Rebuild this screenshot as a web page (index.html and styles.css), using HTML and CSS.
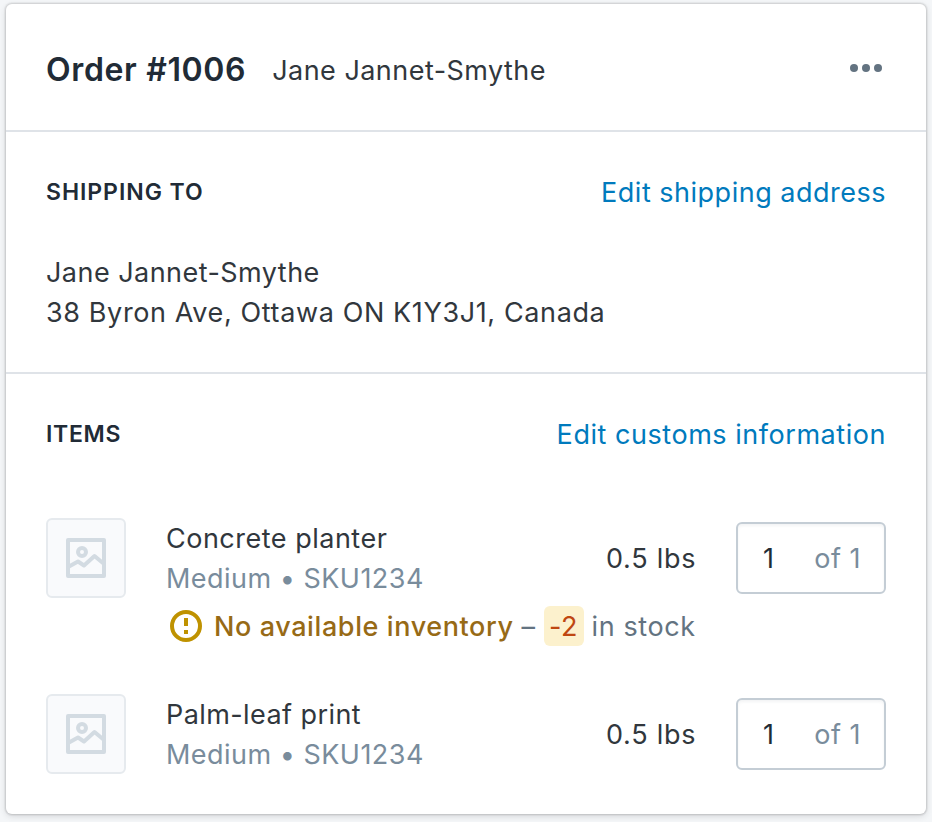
FILE: index.html
```html
<!DOCTYPE html>
<html lang="en">
<head>
<meta charset="utf-8">
<title>Order #1006</title>
<link rel="stylesheet" href="styles.css">
</head>
<body>
<main class="card">
  <header class="header">
    <h1><span class="t order">Order #1006</span></h1>
    <span class="t customer">Jane Jannet-Smythe</span>
    <svg class="more" width="34" height="10" viewBox="0 0 34 10"><circle cx="5" cy="5" r="4"/><circle cx="17" cy="5" r="4"/><circle cx="29" cy="5" r="4"/></svg>
  </header>
  <section class="shipping">
    <div class="section-head"><h2><span class="t ship-title">SHIPPING TO</span></h2><a class="t edit-ship">Edit shipping address</a></div>
    <p class="address"><span class="t name">Jane Jannet-Smythe</span><br><span class="t street">38 Byron Ave, Ottawa ON K1Y3J1, Canada</span></p>
  </section>
  <section class="items">
    <div class="section-head"><h2><span class="t items-title">ITEMS</span></h2><a class="t edit-customs">Edit customs information</a></div>
    <article class="item">
      <div class="thumb"><svg width="40" height="40" viewBox="0 0 40 40"><path d="M2 2h36v36H2z"/><circle cx="16" cy="14" r="4"/><path d="M3 28.500l9-5 6 4 10.500-9.500 9 7.500"/></svg></div>
      <div class="info"><div class="t planter">Concrete planter</div><div class="t variant">Medium • SKU1234</div></div>
      <div class="weight"><span class="t lbs">0.5 lbs</span></div>
      <div class="qty"><span class="count">1</span><span class="total">of 1</span></div>
    </article>
    <div class="warning">
      <svg width="32" height="32" viewBox="0 0 32 32"><circle cx="16" cy="16" r="14"/><path d="M16 8v8M16 20v4"/></svg>
      <span class="t no-inv">No available inventory</span><span class="dash">–</span><span class="badge">-2</span><span class="t stock">in stock</span>
    </div>
    <article class="item second">
      <div class="thumb"><svg width="40" height="40" viewBox="0 0 40 40"><path d="M2 2h36v36H2z"/><circle cx="16" cy="14" r="4"/><path d="M3 28.500l9-5 6 4 10.500-9.500 9 7.500"/></svg></div>
      <div class="info"><div class="t palm">Palm-leaf print</div><div class="t variant">Medium • SKU1234</div></div>
      <div class="weight"><span class="t lbs">0.5 lbs</span></div>
      <div class="qty"><span class="count">1</span><span class="total">of 1</span></div>
    </article>
  </section>
</main>
</body>
</html>
```
FILE: styles.css
```css
* { box-sizing: border-box; }
body { margin: 0; padding: 4px 6px 8px; height: 822px; background: #f4f6f8; font: 27px/40px Inter, sans-serif; letter-spacing: .5px; color: #31373d; overflow: hidden; }
h1, h2, p { margin: 0; }
.t { white-space: nowrap; }
.card { height: 810px; background: #fff; border-radius: 6px; box-shadow: 0 0 0 1px rgba(63,63,68,.09), 0 0 0 2px rgba(63,63,68,.05), 0 2px 6px rgba(63,63,68,.18); }
.header { height: 128px; display: flex; align-items: center; padding: 2px 43px 0 40px; border-bottom: 2px solid #dfe3e8; }
h1 { font-size: 32px; font-weight: 600; color: #212b36; line-height: 40px; letter-spacing: .65px; padding-top: 3px; }
.customer { margin-left: 26px; padding-top: 5px; letter-spacing: .46px; }
.more { margin-left: auto; fill: #637381; }
.shipping { height: 242px; padding: 40px 40px 0; border-bottom: 2px solid #dfe3e8; }
.section-head { display: flex; justify-content: space-between; height: 40px; }
h2 { font-size: 23px; font-weight: 600; line-height: 40px; color: #212b36; letter-spacing: .95px; }
.items-title { letter-spacing: .7px; }
a { color: #007abd; padding-top: 1px; }
.edit-customs { letter-spacing: .54px; }
.address { padding-top: 41px; }
.name { letter-spacing: .46px; }
.street { letter-spacing: .62px; }
.items { padding: 40px 40px 0; }
.item { display: flex; height: 80px; margin-top: 64px; }
.second { margin-top: 48px; }
.thumb { width: 80px; height: 80px; border: 2px solid #e6eaee; border-radius: 6px; background: #f9fafc; display: grid; place-items: center; }
.thumb svg { fill: none; stroke: #d3dbe2; stroke-width: 4; stroke-linejoin: round; }
.info { margin-left: 40px; padding-top: 1px; width: 440px; }
.variant, .total { color: #798c9c; }
.variant { letter-spacing: .47px; }
.palm { letter-spacing: .42px; }
.weight { line-height: 82px; letter-spacing: .75px; }
.qty { margin: 4px 0 0 auto; width: 150px; height: 72px; border: 2px solid #c4cdd5; border-radius: 6px; box-shadow: inset 0 2px 3px rgba(99,115,129,.08); display: flex; justify-content: space-between; padding: 0 23px 0 25px; line-height: 70px; }
.count { color: #212b36; }
.warning { display: flex; align-items: center; height: 40px; margin: 8px 0 0 124px; color: #637381; }
.warning svg { fill: none; stroke: #bf9200; stroke-width: 4; margin-right: 12px; }
.no-inv, .dash, .stock { padding-top: 2px; }
.no-inv { color: #976a16; font-weight: 500; letter-spacing: .6px; }
.dash { margin: 0 8px; }
.badge { width: 40px; height: 40px; border-radius: 6px; line-height: 42px; background: #fcf1cd; color: #bf4711; text-align: center; margin-right: 8px; }
.stock { letter-spacing: .6px; }
```
